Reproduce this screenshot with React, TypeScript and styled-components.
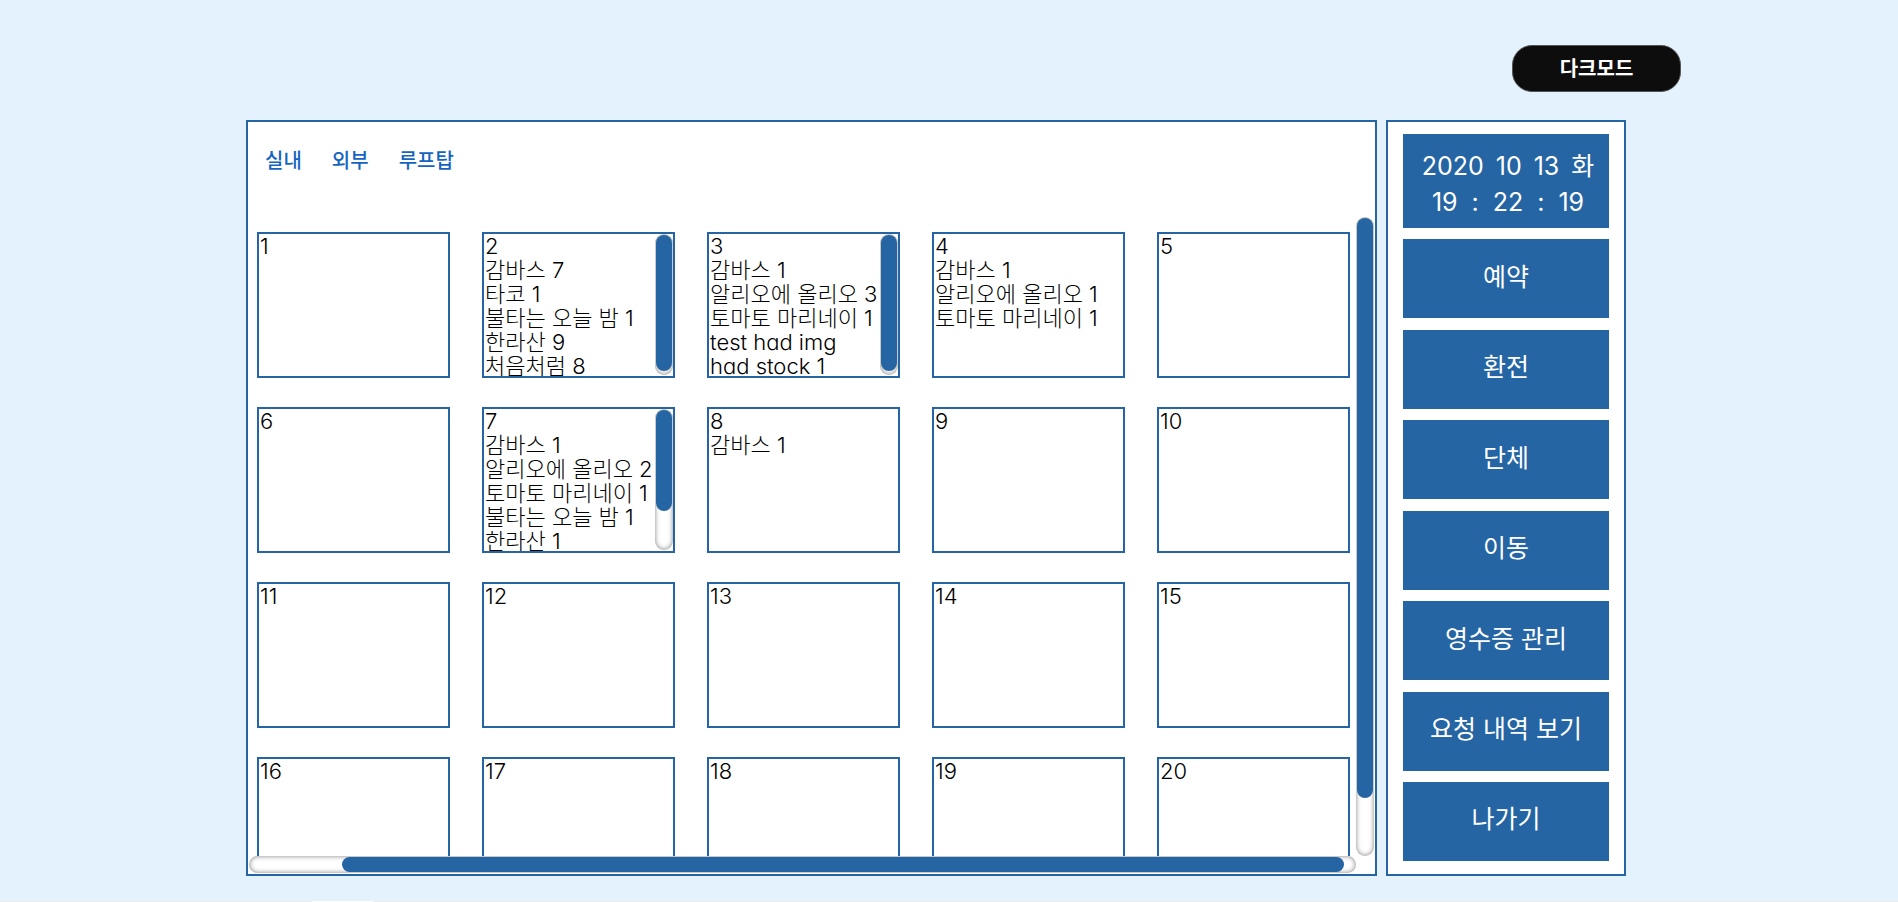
import React from "react";
import styled, { createGlobalStyle } from "styled-components";

const BLUE = "#2565a3";

const GlobalStyle = createGlobalStyle`
  * { box-sizing: border-box; }
  body {
    margin: 0;
    background: #e3f2fd;
    color: #000;
    font-family: Inter, "Noto Sans CJK KR", sans-serif;
    font-weight: 300;
  }
  button { font-family: inherit; cursor: pointer; }
`;

const Page = styled.div`
  display: flex;
  flex-direction: column;
  height: 100vh;
  min-height: 700px;
`;

const TopBar = styled.header`
  display: flex;
  justify-content: flex-end;
  flex: none;
  height: 120px;
  padding: 45px 217px 0 0;
`;

const DarkModeButton = styled.button`
  width: 169px;
  height: 47px;
  padding: 0 0 2px;
  border: 1px solid #555;
  border-radius: 20px;
  background: #0d0d0d;
  color: #fff;
  font-size: 20px;
  font-weight: 700;
`;

const Workspace = styled.div`
  display: flex;
  flex: 1;
  gap: 9px;
  min-height: 0;
  padding: 0 272px 25px 246px;
`;

const TablePanel = styled.main`
  display: flex;
  flex-direction: column;
  flex: 1;
  min-width: 0;
  border: 2px solid ${BLUE};
  background: #fff;
`;

const Tabs = styled.nav`
  display: flex;
  flex: none;
  gap: 30px;
  height: 95px;
  padding: 24px 17px 0;
`;

const TabButton = styled.button`
  align-self: flex-start;
  padding: 0;
  border: 0;
  background: none;
  color: #1565c0;
  font-size: 20px;
  font-weight: 500;
  line-height: 30px;
`;

const ScrollArea = styled.div`
  display: grid;
  flex: 1;
  grid-template-columns: minmax(0, 1fr) 18px;
  grid-template-rows: minmax(0, 1fr) 18px;
  min-height: 0;
  padding: 0 1px;
`;

const Viewport = styled.div`
  overflow: hidden;
`;

const TableGrid = styled.div`
  display: grid;
  grid-template-columns: repeat(5, minmax(0, 1fr));
  gap: 29px 32px;
  padding: 15px 6px 0 8px;
`;

const Card = styled.section`
  display: flex;
  height: 146px;
  overflow: hidden;
  border: 2px solid ${BLUE};
  background: #fff;
`;

const CardText = styled.div`
  flex: 1;
  min-width: 0;
  padding-left: 1px;
  font-size: 22px;
  line-height: 24px;
  font-feature-settings: "cv11";
`;

const CardNumber = styled.h2`
  margin: 0;
  font-size: inherit;
  font-weight: inherit;
`;

const OrderList = styled.ul`
  margin: 0;
  padding: 0;
  list-style: none;
`;

const Track = styled.div<{ $horizontal?: boolean }>`
  display: flex;
  flex: none;
  flex-direction: ${(p) => (p.$horizontal ? "row" : "column")};
  width: ${(p) => (p.$horizontal ? "auto" : "18px")};
  height: ${(p) => (p.$horizontal ? "17px" : "auto")};
  padding: 1px;
  border-radius: 10px;
  background: #fff;
  box-shadow: inset 0 0 5px rgba(0, 0, 0, 0.5);
`;

const CardTrack = styled(Track)`
  margin-bottom: 1px;
`;

const Thumb = styled.div`
  border-radius: 10px;
  background: ${BLUE};
`;

const SidePanel = styled.aside`
  display: flex;
  flex: none;
  flex-direction: column;
  justify-content: space-between;
  width: 240px;
  padding: 12px 15px 13px;
  border: 2px solid ${BLUE};
  background: #fff;
  color: #fff;
  font-size: 25px;
  font-weight: 400;
`;

const Clock = styled.div`
  display: flex;
  flex-direction: column;
  align-items: center;
  flex: none;
  height: 94px;
  padding: 14px 0 0 4px;
  background: ${BLUE};
  line-height: 36px;
  white-space: nowrap;
`;

const ClockLine = styled.div<{ $gap: number }>`
  display: flex;
  gap: ${(p) => p.$gap}px;
`;

const MenuButton = styled.button`
  flex: none;
  height: 79px;
  padding: 0 0 8px;
  border: 0;
  background: ${BLUE};
  color: inherit;
  font-size: inherit;
  font-weight: inherit;
`;

const Footer = styled.footer`
  flex: none;
  height: 1px;
  padding-left: 312px;
  background: #ececec;
`;

const FooterTab = styled.div`
  width: 61px;
  height: 1px;
  background: #fff;
`;

type TableInfo = { id: number; orders: string[]; scroll?: number };

const ORDERS: Record<number, { orders: string[]; scroll?: number }> = {
  2: { orders: ["감바스 7", "타코 1", "불타는 오늘 밤 1", "한라산 9", "처음처럼 8"], scroll: 98 },
  3: { orders: ["감바스 1", "알리오에 올리오 3", "토마토 마리네이 1", "test had img had stock 1"], scroll: 98 },
  4: { orders: ["감바스 1", "알리오에 올리오 1", "토마토 마리네이 1"] },
  7: { orders: ["감바스 1", "알리오에 올리오 2", "토마토 마리네이 1", "불타는 오늘 밤 1", "한라산 1"], scroll: 73 },
  8: { orders: ["감바스 1"] },
};

const TABLES: TableInfo[] = Array.from({ length: 20 }, (_, i) => ({
  id: i + 1,
  orders: [],
  ...ORDERS[i + 1],
}));

const MENU = ["예약", "환전", "단체", "이동", "영수증 관리", "요청 내역 보기", "나가기"];

function TableCard({ id, orders, scroll }: TableInfo) {
  return (
    <Card>
      <CardText>
        <CardNumber>{id}</CardNumber>
        <OrderList>
          {orders.map((order) => (
            <li key={order}>{order}</li>
          ))}
        </OrderList>
      </CardText>
      {scroll && (
        <CardTrack>
          <Thumb style={{ height: `${scroll}%` }} />
        </CardTrack>
      )}
    </Card>
  );
}

export default function App() {
  return (
    <>
      <GlobalStyle />
      <Page>
        <TopBar>
          <DarkModeButton>다크모드</DarkModeButton>
        </TopBar>
        <Workspace>
          <TablePanel>
            <Tabs>
              {["실내", "외부", "루프탑"].map((t) => (
                <TabButton key={t}>{t}</TabButton>
              ))}
            </Tabs>
            <ScrollArea>
              <Viewport>
                <TableGrid>
                  {TABLES.map((t) => (
                    <TableCard key={t.id} {...t} />
                  ))}
                </TableGrid>
              </Viewport>
              <Track>
                <Thumb style={{ height: "91%" }} />
              </Track>
              <Track $horizontal>
                <Thumb style={{ width: "90.7%", marginLeft: "8.3%" }} />
              </Track>
            </ScrollArea>
          </TablePanel>
          <SidePanel>
            <Clock>
              <ClockLine $gap={12}>
                <span>2020</span>
                <span>10</span>
                <span>13</span>
                <span>화</span>
              </ClockLine>
              <ClockLine $gap={14}>
                <span>19</span>
                <span>:</span>
                <span>22</span>
                <span>:</span>
                <span>19</span>
              </ClockLine>
            </Clock>
            {MENU.map((m) => (
              <MenuButton key={m}>{m}</MenuButton>
            ))}
          </SidePanel>
        </Workspace>
        <Footer>
          <FooterTab />
        </Footer>
      </Page>
    </>
  );
}
